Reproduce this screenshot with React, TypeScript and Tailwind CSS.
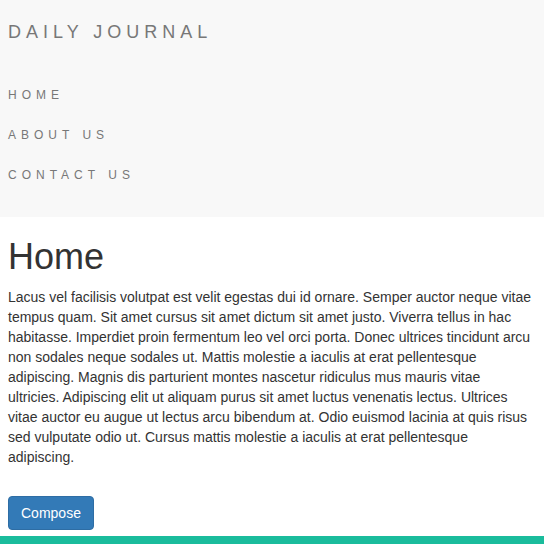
export default function App() {
  const links = ['Home', 'About Us', 'Contact Us'];

  return (
    <div className="bg-white text-[14px] leading-[20px] text-[#333]" style={{ fontFamily: '"Liberation Sans", Arial, sans-serif' }}>
      {/* navbar (collapsed) */}
      <nav className="bg-[#f8f8f8] px-2 pt-[22px] pb-[22px]">
        <a className="block text-[18px] leading-[20px] uppercase tracking-[5px] text-[#777]">Daily Journal</a>
        <ul className="mt-[33px]">
          {links.map((l) => (
            <li key={l}>
              <a className="block py-[10px] text-[12px] leading-[20px] uppercase tracking-[5px] text-[#777]">{l}</a>
            </li>
          ))}
        </ul>
      </nav>

      <div className="pl-2 pr-[11px]">
        <h1 className="mt-5 mb-[10px] text-[36px] leading-[1.1] font-normal">Home</h1>
        <p className="mb-[29px]">
          Lacus vel facilisis volutpat est velit egestas dui id ornare. Semper auctor neque vitae tempus quam. Sit amet cursus sit amet dictum sit amet justo. Viverra tellus in hac habitasse. Imperdiet proin fermentum leo vel orci porta. Donec ultrices tincidunt arcu non sodales neque sodales ut. Mattis molestie a iaculis at erat pellentesque adipiscing. Magnis dis parturient montes nascetur ridiculus mus mauris vitae ultricies. Adipiscing elit ut aliquam purus sit amet luctus venenatis lectus. Ultrices vitae auctor eu augue ut lectus arcu bibendum at. Odio euismod lacinia at quis risus sed vulputate odio ut. Cursus mattis molestie a iaculis at erat pellentesque adipiscing.
        </p>
        <button className="rounded-[4px] border border-[#2e6da4] bg-[#337ab7] px-3 py-[6px] text-[14px] leading-[20px] text-white">
          Compose
        </button>
      </div>

      <footer className="mt-[6px] h-[8px] bg-[#1abc9c]" />
    </div>
  );
}
